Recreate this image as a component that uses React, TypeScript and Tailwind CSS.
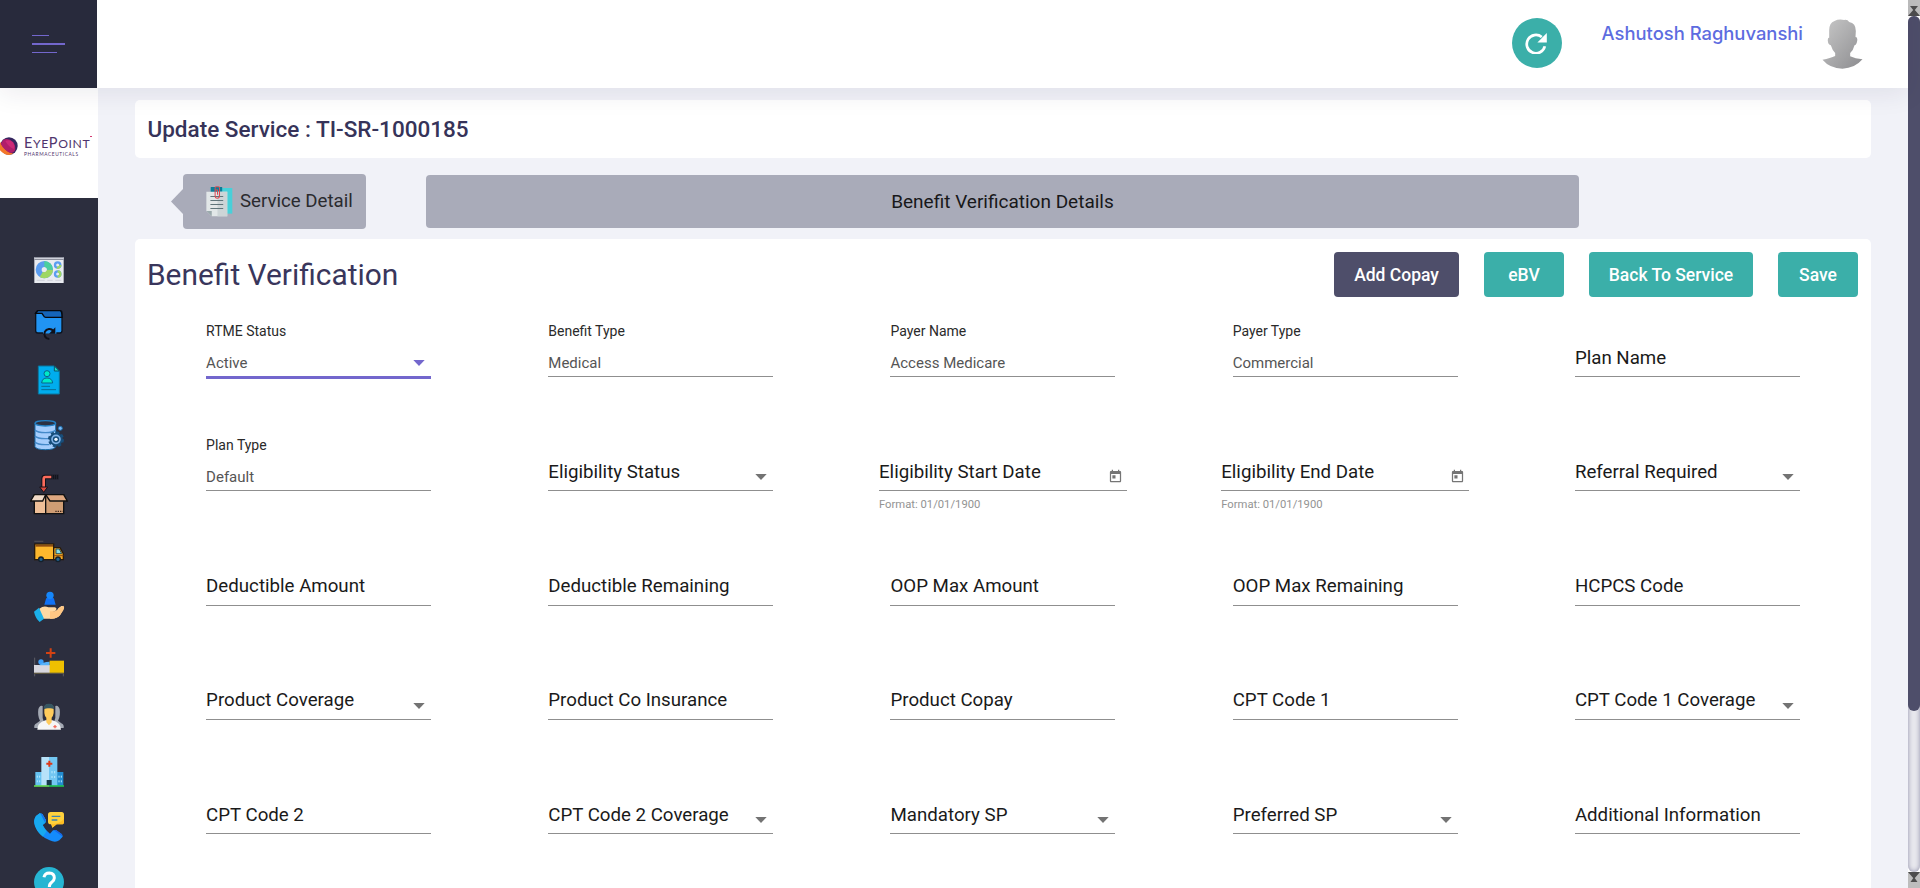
import React from "react";

type Kind = "text" | "select" | "date";
interface FieldProps {
  label: string;
  value?: string;
  kind?: Kind;
  active?: boolean;
}

const fields: FieldProps[] = [
  { label: "RTME Status", value: "Active", kind: "select", active: true },
  { label: "Benefit Type", value: "Medical" },
  { label: "Payer Name", value: "Access Medicare" },
  { label: "Payer Type", value: "Commercial" },
  { label: "Plan Name" },
  { label: "Plan Type", value: "Default" },
  { label: "Eligibility Status", kind: "select" },
  { label: "Eligibility Start Date", kind: "date" },
  { label: "Eligibility End Date", kind: "date" },
  { label: "Referral Required", kind: "select" },
  { label: "Deductible Amount" },
  { label: "Deductible Remaining" },
  { label: "OOP Max Amount" },
  { label: "OOP Max Remaining" },
  { label: "HCPCS Code" },
  { label: "Product Coverage", kind: "select" },
  { label: "Product Co Insurance" },
  { label: "Product Copay" },
  { label: "CPT Code 1" },
  { label: "CPT Code 1 Coverage", kind: "select" },
  { label: "CPT Code 2" },
  { label: "CPT Code 2 Coverage", kind: "select" },
  { label: "Mandatory SP", kind: "select" },
  { label: "Preferred SP", kind: "select" },
  { label: "Additional Information" },
];

function Arrow({ active }: { active?: boolean }) {
  return (
    <svg
      viewBox="0 0 12 6"
      className={active ? "mb-[10px] mr-1.5 h-[6px] w-3 fill-[#7367cd]" : "mb-[10px] mr-1.5 h-[6px] w-3 fill-[#737373]"}
    >
      <path d="M0.3 0H11.7L6 6Z" />
    </svg>
  );
}

function CalendarIcon() {
  return (
    <svg viewBox="0 0 24 24" className="mb-[6px] mr-1 h-[15px] w-[15px] fill-[#757575]">
      <path d="M19 3h-1V1h-2v2H8V1H6v2H5c-1.11 0-1.99.9-1.99 2L3 19c0 1.1.89 2 2 2h14c1.1 0 2-.9 2-2V5c0-1.1-.9-2-2-2zm0 16H5V8h14v11zM7 10h5v5H7z" />
    </svg>
  );
}

function Field({ label, value, kind = "text", active }: FieldProps) {
  return (
    <div className={kind === "date" ? "mx-auto flex w-[248px] flex-col" : "mx-auto flex w-[225px] flex-col"}>
      <div
        className={
          active
            ? "flex h-[64px] items-end justify-between border-b-[3px] border-[#7367cd]"
            : "flex h-[62px] items-end justify-between border-b border-[#8f8f8f]"
        }
      >
        {value ? (
          <div className="flex flex-col">
            <span className="mb-[6px] text-[14px] leading-[32px] text-[#2a2a2a]">{label}</span>
            <span className="mb-[3px] text-[15px] leading-[20px] text-[#555]">{value}</span>
          </div>
        ) : (
          <span className="mb-[5.3px] text-[18.7px] leading-[26px] text-[#1a1a1a]">{label}</span>
        )}
        {kind === "select" && <Arrow active={active} />}
        {kind === "date" && <CalendarIcon />}
      </div>
      {kind === "date" && <span className="mt-[7px] text-[11.25px] leading-[14px] text-[#939393]">Format: 01/01/1900</span>}
    </div>
  );
}

const ico = "h-[30px] w-[30px] shrink-0 overflow-visible";

function DashboardIcon() {
  return (
    <svg viewBox="0 0 90 90" className={ico}>
      <rect x="1" y="6" width="88" height="78" fill="#e9ebf0" />
      <rect x="1" y="6" width="88" height="9" fill="#8e919e" />
      <rect x="1" y="9" width="88" height="3" fill="#cfd1da" />
      <circle cx="31" cy="44" r="17" fill="none" stroke="#5b9df0" strokeWidth="18" />
      <path d="M48 44A17 17 0 0 1 22 58" fill="none" stroke="#9ed764" strokeWidth="18" />
      <path d="M31 27A17 17 0 0 1 48 44" fill="none" stroke="#4bcf9f" strokeWidth="18" />
      <circle cx="71" cy="30" r="8" fill="none" stroke="#5b9df0" strokeWidth="7" />
      <path d="M79 30A8 8 0 0 1 69 38" fill="none" stroke="#9ed764" strokeWidth="7" />
      <circle cx="71" cy="57" r="8" fill="none" stroke="#5b9df0" strokeWidth="7" />
      <path d="M71 49A8 8 0 0 1 71 65" fill="none" stroke="#9ed764" strokeWidth="7" />
      <path d="M8 76H32M40 76H56M64 76H82" stroke="#c3c6d0" strokeWidth="2" />
    </svg>
  );
}
function FolderIcon() {
  return (
    <svg viewBox="0 0 90 90" className={ico}>
      <path d="M10 2H78Q84 2 84 8V62Q84 69 77 69H12Q5 69 5 62V8Z" fill="#2194f3" stroke="#0c1420" strokeWidth="4" />
      <path d="M12 2H78Q84 3 84 22H35Q30 22 28 16L24 10H5Z" fill="#1565b9" stroke="#06090e" strokeWidth="4" />
      <path d="M27 71V66Q30 52 45 52Q60 52 67 64V71Z" fill="#2194f3" />
      <path d="M30 71H62V76H30Z" fill="#2c2e3e" />
      <path d="M46 87A15 15 0 1 1 58 63" fill="none" stroke="#101018" strokeWidth="6" />
      <path d="M64 52V71H45Z" fill="#101018" />
    </svg>
  );
}
function DocIcon() {
  return (
    <svg viewBox="0 0 90 90" className={ico}>
      <path d="M13 3H61L76 18V87H13Z" fill="#00adee" stroke="#09779f" strokeWidth="3" />
      <path d="M61 3V18H76Z" fill="#20dcc2" stroke="#0c5269" strokeWidth="3" />
      <circle cx="39" cy="26" r="9" fill="#00eac7" stroke="#08658b" strokeWidth="3" />
      <path d="M23 54Q24 39 39 39Q54 39 56 54Z" fill="#00eac7" stroke="#08658b" strokeWidth="3" />
      <path d="M22 64H48M22 74H66" stroke="#086e93" strokeWidth="3" />
    </svg>
  );
}
function DatabaseIcon() {
  return (
    <svg viewBox="0 0 90 90" className={ico}>
      <path d="M3 10V80Q7 89 34 89T65 80V10Z" fill="#a5cdfc" stroke="#1b6ca8" strokeWidth="3" />
      <ellipse cx="34" cy="10" rx="31" ry="8" fill="#2d3142" stroke="#2580c3" strokeWidth="4" />
      <path d="M3 30Q10 38 34 38T65 30M3 48Q10 56 34 56H50M3 66Q10 74 34 74H46" fill="none" stroke="#4389c9" strokeWidth="4" />
      <circle cx="79" cy="25" r="6" fill="#7abaf6" stroke="#1b6ca8" strokeWidth="3" />
      <circle cx="66" cy="58" r="20" fill="#174e7b" stroke="#174e7b" strokeWidth="8" strokeDasharray="9 6.7" />
      <circle cx="66" cy="58" r="12" fill="none" stroke="#7fb2e8" strokeWidth="5" />
      <circle cx="66" cy="58" r="5" fill="#eef6ff" />
    </svg>
  );
}
function BoxIcon() {
  return (
    <svg viewBox="0 0 114 126" className="-my-[2.5px] h-[42px] w-[38px] shrink-0">
      <path d="M86 12H44Q41 12 41 16V46" fill="none" stroke="#12131a" strokeWidth="14" />
      <path d="M64 12H46Q41 12 41 18V46" fill="none" stroke="#fb6b5b" strokeWidth="8" />
      <path d="M29 42H53L41 58Z" fill="#d9493d" stroke="#12131a" strokeWidth="3" />
      <path d="M67 5V19M73 5V19M79 5V19M85 5V19" stroke="#2c2d3c" strokeWidth="2" />
      <path d="M13 66H47V122H13Z" fill="#eebf98" stroke="#111" strokeWidth="4" />
      <path d="M47 66H101V122H47Z" fill="#cf9d74" stroke="#111" strokeWidth="4" />
      <path d="M13 65H47L38 84H2Z" fill="#f1dac6" stroke="#111" strokeWidth="4" />
      <path d="M47 65H101L112 84H60Z" fill="#dfa880" stroke="#111" strokeWidth="4" />
      <path d="M76 115H98" stroke="#3c271c" strokeWidth="4" strokeDasharray="4 3" />
    </svg>
  );
}
function TruckIcon() {
  return (
    <svg viewBox="0 0 90 90" className={ico}>
      <path d="M1 13H28" stroke="#4b4b52" strokeWidth="4" />
      <rect x="2" y="21" width="57" height="47" fill="#fdb82d" stroke="#281b0c" strokeWidth="4" />
      <path d="M4 26H57" stroke="#8c4d13" strokeWidth="6" />
      <path d="M59 32H78L88 50V68H59Z" fill="#f7a81f" stroke="#281b0c" strokeWidth="4" />
      <path d="M66 36H76L83 50H66Z" fill="#8bdfe6" stroke="#2c545b" strokeWidth="3" />
      <path d="M60 56H88" stroke="#8c4d13" strokeWidth="3" />
      <circle cx="21" cy="67" r="7" fill="#21618c" stroke="#14202b" strokeWidth="4" />
      <circle cx="72" cy="67" r="7" fill="#21618c" stroke="#14202b" strokeWidth="4" />
    </svg>
  );
}
function HandIcon() {
  return (
    <svg viewBox="0 0 90 90" className={ico}>
      <path d="M31 38L36 20Q38 16 42 18H54Q58 16 60 20L65 38Z" fill="#1172f5" />
      <circle cx="48" cy="10" r="11" fill="#1687fa" />
      <path d="M16 50Q30 39 43 46H62Q71 49 65 56L55 59Q67 61 73 49L82 42Q92 40 90 49L78 70Q67 82 48 80H29L18 84Z" fill="#ffd9a3" />
      <path d="M48 58H63Q72 54 76 47L88 41Q92 46 88 55L78 70Q67 82 48 80Z" fill="#ffc784" />
      <path d="M0 59L15 47L30 80L17 90Q4 78 0 59Z" fill="#1bb0e9" />
    </svg>
  );
}
function BedIcon() {
  return (
    <svg viewBox="0 0 90 90" className={ico}>
      <path d="M50 4V32M36 18H64" stroke="#d44212" strokeWidth="6" />
      <path d="M2 32V88M88 60V88" stroke="#77767a" strokeWidth="2" />
      <rect y="54" width="49" height="24" fill="#d8d7df" />
      <circle cx="21" cy="45" r="8" fill="#3da1fb" />
      <path d="M16 55Q25 44 47 44V55Z" fill="#56b2fb" />
      <rect x="47" y="41" width="43" height="37" fill="#efc000" />
      <path d="M0 79H90" stroke="#5c5641" strokeWidth="4" />
    </svg>
  );
}
function DoctorIcon() {
  return (
    <svg viewBox="0 0 90 90" className={ico}>
      <path d="M13 22Q17 8 26 12V48L30 60L12 78H1Q-1 68 8 64L18 56Q10 42 13 22Z" fill="#a4a9b3" />
      <path d="M77 22Q73 8 64 12V48L60 60L78 78H89Q91 68 82 64L72 56Q80 42 77 22Z" fill="#a4a9b3" />
      <path d="M10 83Q10 62 34 55H56Q80 62 81 83Z" fill="#f5f6f7" />
      <path d="M31 20Q31 7 45 7T59 20V33Q57 44 53 47V61L45 70L37 61V47Q32 43 31 33Z" fill="#ffcb5c" />
      <path d="M30 22Q27 5 45 5Q62 5 60 22Q54 18 45 19Q37 18 30 22Z" fill="#365662" />
      <path d="M63 69V79M58 74H68" stroke="#f36d5f" strokeWidth="4" />
    </svg>
  );
}
function HospitalIcon() {
  return (
    <svg viewBox="0 0 90 90" className={ico}>
      <rect x="4" y="45" width="21" height="42" fill="#65c2f1" />
      <rect x="68" y="45" width="20" height="42" fill="#238dd0" />
      <rect x="22" width="24" height="87" fill="#b7e2f9" />
      <rect x="45" width="25" height="87" fill="#73c7f2" />
      <path d="M46 11V29M37 20H55" stroke="#dc3817" strokeWidth="6" />
      <path d="M10 56V62M17 56V62M10 70V76M17 70V76M75 56V62M82 56V62M75 70V76M82 70V76M54 42V49M62 42V49M54 57V63M62 57V63" stroke="#b9eafe" strokeWidth="3" />
      <rect x="38" y="69" width="15" height="18" fill="#17394c" />
      <path d="M0 87H46" stroke="#61d653" strokeWidth="5" />
      <path d="M45 87H90" stroke="#1fbe52" strokeWidth="5" />
    </svg>
  );
}
function PhoneIcon() {
  return (
    <svg viewBox="0 0 90 90" className={ico}>
      <path d="M6 12L17 4L25 6L36 25L34 32L26 39Q34 55 48 65L57 55L66 54L84 67L86 74L76 85Q64 93 47 85Q16 73 3 42Q-3 24 6 12Z" fill="#148bfb" />
      <path d="M6 12L17 4L25 6L36 25L34 32L26 39Q30 50 38 57L27 74Q10 62 3 42Q-3 24 6 12Z" fill="#18a9ef" />
      <path d="M19 4L25 6L36 25L32 30Z" fill="#1674ee" />
      <path d="M60 55L66 54L84 67L86 74Z" fill="#1766e8" />
      <path d="M50 0H83Q90 0 90 8V29Q90 37 83 37H68L55 47L51 37Q42 37 42 29V8Q42 0 50 0Z" fill="#ffd13c" />
      <path d="M90 20V29Q90 37 83 37H68L55 47L54 37Q80 34 90 20Z" fill="#ffbd23" />
      <path d="M53 13H79M53 24H70" stroke="#3f83ab" strokeWidth="4" />
    </svg>
  );
}
function HelpIcon() {
  return (
    <svg viewBox="0 0 90 90" className={ico}>
      <circle cx="45" cy="45" r="45" fill="#26b5d2" />
      <path d="M30 31Q32 18 46 18Q61 19 61 33Q61 40 53 46Q46 51 46 60" fill="none" stroke="#fff" strokeWidth="9" />
      <circle cx="46" cy="72" r="5" fill="#fff" />
    </svg>
  );
}

function Logo() {
  return (
    <div className="flex h-[110px] w-[98px] shrink-0 items-center bg-white pt-[6px]">
      <svg viewBox="0 0 54 54" className="h-[18px] w-[18px] shrink-0">
        <circle cx="27" cy="27" r="26" fill="#35265f" />
        <path d="M0 14V40Q12 54 28 54L40 50Q14 44 0 14Z" fill="#f4772a" />
        <path d="M2 20L10 8Q26 2 38 14Q50 28 44 42Q40 48 32 48Q12 40 2 20Z" fill="#b01d6b" />
        <path d="M16 12Q28 6 38 16Q46 26 41 36Q26 30 16 12Z" fill="#cc2878" />
      </svg>
      <div className="ml-1.5 flex flex-col text-[#50346d]">
        <span className="flex items-baseline font-['Lato',sans-serif] text-[12.2px] leading-[14px] tracking-[0.6px]">
          <span className="text-[14.5px]">E</span>YE<span className="text-[14.5px]">P</span>OINT
          <span className="h-px w-[2px] self-start bg-[#d43a72]" />
        </span>
        <span className="font-['Lato',sans-serif] text-[4.8px] leading-[6px] tracking-[0.6px]">PHARMACEUTICALS</span>
      </div>
    </div>
  );
}

function ServiceIcon() {
  return (
    <svg viewBox="0 0 80 92" className="-ml-px h-[31px] w-[27px]">
      <path d="M14 6H78V82H14Z" fill="#48d0d9" />
      <path d="M14 3H48V30H14Z" fill="#0d7e99" />
      <path d="M1 17H63V90H17L1 74Z" fill="#e2e7e8" />
      <path d="M34 17H63V90H34Z" fill="#cdd5d7" />
      <path d="M1 74H17V90Z" fill="#9aa9ac" />
      <path d="M13 31H51M13 43H51M13 55H51M13 67H51" stroke="#60757b" strokeWidth="3" />
      <path d="M27 24V5Q27 2 30 2H37Q40 2 40 5V29Q40 36 33 36Q27 36 27 29V12H34V26" fill="none" stroke="#dd4a50" strokeWidth="3" />
    </svg>
  );
}

function Avatar() {
  return (
    <svg viewBox="0 0 122 150" className="h-[50px] w-[41px]">
      <defs>
        <linearGradient id="avatarFill" x1="0" y1="0" x2="1" y2="1">
          <stop offset="0" stopColor="#c8c8c8" />
          <stop offset="1" stopColor="#8c8c8f" />
        </linearGradient>
      </defs>
      <path
        d="M21 56V34Q21 12 37 6Q50 -1 66 3Q76 1 81 9Q101 12 101 36L100 54Q107 54 105 66Q103 78 97 79Q94 93 84 102V112Q99 119 121 121Q98 148 61 149Q23 148 1 122Q25 118 39 111V102Q30 93 26 79Q18 77 17 66Q16 55 21 56Z"
        fill="url(#avatarFill)"
      />
    </svg>
  );
}

function Scrollbar() {
  return (
    <div className="flex h-[888px] w-3 shrink-0 flex-col bg-white">
      <svg viewBox="0 0 12 16" className="h-4 w-3 shrink-0">
        <path d="M0 0H12V16H0Z" fill="#bdbdbd" />
        <path d="M2 6H10L6 11ZM6 9L12 16H0Z" fill="#4d4d4d" />
      </svg>
      <div className="flex-1 rounded-full bg-[#e8e8ee] shadow-[inset_0_0_5px_#8f8fa8]">
        <div className="h-[695px] rounded-full bg-[#4e4e6a]" />
      </div>
      <svg viewBox="0 0 12 16" className="h-4 w-3 shrink-0">
        <path d="M0 0H12V16H0Z" fill="#bdbdbd" />
        <path d="M0 0H12L6 7ZM6 5L9.5 10H2.5Z" fill="#4d4d4d" />
      </svg>
    </div>
  );
}

const btn = "h-[45px] rounded-[4px] pt-px text-[17.5px] font-medium text-white";

export default function App() {
  return (
    <div className="flex h-[888px] w-[1920px] overflow-hidden bg-[#f1f2f8] font-['Roboto',sans-serif]">
      <div className="flex min-w-0 flex-1 flex-col">
        <header className="relative z-10 flex h-[88px] shrink-0 bg-white shadow-[0_6px_24px_rgba(40,30,60,0.08)]">
          <div className="flex w-[97px] flex-col items-start justify-center gap-[7px] bg-[#282a3c] pl-8">
            <div className="h-px w-[17px] bg-[#7367cd]" />
            <div className="h-[2px] w-[33px] bg-[#7367cd]" />
            <div className="h-px w-[25px] bg-[#7367cd]" />
          </div>
          <div className="flex flex-1 items-start justify-end pr-[45px]">
            <button className="mt-[18px] flex h-[50px] w-[50px] items-center justify-center rounded-full bg-[#3bafa9]">
              <svg viewBox="0 0 64 62" className="mr-px mt-px h-[21px] w-[22px]">
                <path d="M58 39A27 27 0 1 1 49 12" fill="none" stroke="#fff" strokeWidth="8" />
                <path d="M64 0V28H36Z" fill="#fff" />
              </svg>
            </button>
            <span className="ml-[40px] mt-[20px] font-['Inter',sans-serif] text-[18.4px] font-medium leading-[26px] text-[#5d6ce0]">Ashutosh Raghuvanshi</span>
            <div className="ml-[19px] mt-[19px]">
              <Avatar />
            </div>
          </div>
        </header>
        <div className="flex min-h-0 flex-1">
          <aside className="flex w-[98px] shrink-0 flex-col overflow-hidden bg-[#2c2e3e]">
            <Logo />
            <nav className="flex flex-col items-center gap-[25px] pt-[57px]">
              <DashboardIcon />
              <FolderIcon />
              <DocIcon />
              <DatabaseIcon />
              <BoxIcon />
              <TruckIcon />
              <HandIcon />
              <BedIcon />
              <DoctorIcon />
              <HospitalIcon />
              <PhoneIcon />
              <HelpIcon />
            </nav>
          </aside>
          <main className="flex min-w-0 flex-1 flex-col pl-[37px] pr-[37px] pt-3">
            <div className="flex h-[58px] shrink-0 items-center rounded-[5px] bg-white pl-[12.5px]">
              <h1 className="pt-px text-[22.5px] font-medium text-[#363359]">Update Service : TI-SR-1000185</h1>
            </div>
            <div className="flex h-[81px] shrink-0 items-start pl-9 pt-4">
              <svg viewBox="0 0 12 25" className="mt-[15px] h-[25px] w-3 fill-[#a9abb9]">
                <path d="M12 0V25L0 12.5Z" />
              </svg>
              <div className="flex h-[55px] w-[183px] items-center rounded-[4px] bg-[#a9abb9] pl-6">
                <ServiceIcon />
                <span className="mb-[2px] ml-[7px] text-[18.67px] leading-[28px] text-[#2a2a2e]">Service Detail</span>
              </div>
              <div className="ml-[60px] mt-px flex h-[53px] w-[1153px] items-center justify-center rounded-[4px] bg-[#a9abb9] pt-px text-[19px] text-[#18181a]">
                Benefit Verification Details
              </div>
            </div>
            <section className="flex flex-1 flex-col rounded-t-[5px] bg-white">
              <div className="flex h-[74px] shrink-0 items-start justify-between pl-[12px] pr-[13px]">
                <h2 className="mt-[14px] text-[29.9px] leading-[44px] text-[#39365c]">Benefit Verification</h2>
                <div className="mt-[13px] flex gap-[25px]">
                  <button className={`${btn} w-[125px] bg-[#4e4e6a]`}>Add Copay</button>
                  <button className={`${btn} w-[80px] bg-[#3bafa9]`}>eBV</button>
                  <button className={`${btn} w-[164px] bg-[#3bafa9]`}>Back To Service</button>
                  <button className={`${btn} w-[80px] bg-[#3bafa9]`}>Save</button>
                </div>
              </div>
              <div className="grid auto-rows-[114.25px] grid-cols-5 px-[12.5px] pt-[2px]">
                {fields.map((f) => (
                  <Field key={f.label} {...f} />
                ))}
              </div>
            </section>
          </main>
        </div>
      </div>
      <Scrollbar />
    </div>
  );
}
